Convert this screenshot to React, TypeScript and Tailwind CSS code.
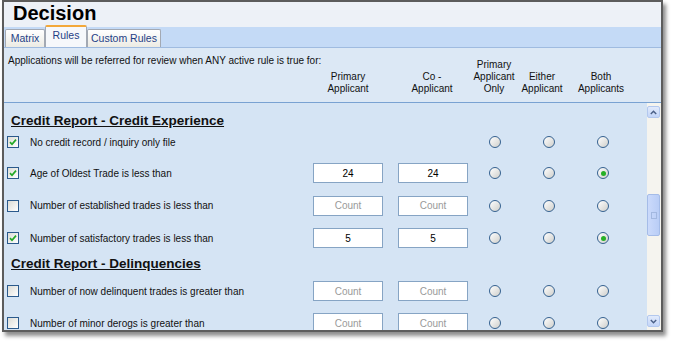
import React from 'react';

type Row = {
  label: string;
  checked: boolean;
  primary?: string;
  co?: string;
  both?: boolean;
  h: string;
};

const Checkbox = ({ checked }: { checked: boolean }) => (
  <span className="flex h-[12px] w-[12px] shrink-0 items-center justify-center border border-[#2b5a8c] bg-linear-to-br from-[#dcdcd6] to-white">
    {checked && (
      <svg width="8" height="8" viewBox="0 0 8 8">
        <path d="M1 4.2 L3 6.3 L7 1.6" fill="none" stroke="#22a826" strokeWidth="1.7" />
      </svg>
    )}
  </span>
);

const Radio = ({ checked }: { checked?: boolean }) => (
  <span className="flex h-[12px] w-[12px] items-center justify-center rounded-full border border-[#35618f] bg-linear-to-br from-white to-[#cfcfcb]">
    {checked && <span className="h-[5px] w-[5px] rounded-full bg-[#26b026]" />}
  </span>
);

const Field = ({ value }: { value?: string }) => (
  <div
    className={`flex h-[20px] w-[70px] items-center justify-center border border-[#86a4c4] bg-white text-[10px] ${
      value ? 'text-black' : 'text-[#9a9a9a]'
    }`}
  >
    {value ?? 'Count'}
  </div>
);

const RuleRow = ({ row }: { row: Row }) => (
  <div className={`flex items-center ${row.h}`}>
    <div className="flex w-[309px] items-center pl-[3px]">
      <Checkbox checked={row.checked} />
      <span className="ml-[11px] whitespace-nowrap text-[10px] text-[#111]">{row.label}</span>
    </div>
    {row.primary !== undefined ? (
      <>
        <Field value={row.primary || undefined} />
        <div className="ml-[15px]">
          <Field value={row.co || undefined} />
        </div>
      </>
    ) : (
      <div className="w-[155px]" />
    )}
    <div className="flex w-[54px] justify-center">
      <Radio />
    </div>
    <div className="flex w-[53px] justify-center">
      <Radio />
    </div>
    <div className="flex w-[56px] justify-center">
      <Radio checked={row.both} />
    </div>
  </div>
);

const Section = ({ title, className }: { title: string; className: string }) => (
  <div className={`pl-[7px] text-[13.5px] font-bold leading-[16px] text-[#111] ${className}`}>
    <span className="underline underline-offset-[1px]">{title}</span>
  </div>
);

const experience: Row[] = [
  { label: 'No credit record / inquiry only file', checked: true, h: 'h-[30px]' },
  { label: 'Age of Oldest Trade is less than', checked: true, primary: '24', co: '24', both: true, h: 'h-[32px]' },
  { label: 'Number of established trades is less than', checked: false, primary: '', co: '', h: 'h-[33px]' },
  { label: 'Number of satisfactory trades is less than', checked: true, primary: '5', co: '5', both: true, h: 'h-[32px]' },
];

const delinquencies: Row[] = [
  { label: 'Number of now delinquent trades is greater than', checked: false, primary: '', co: '', h: 'h-[32px]' },
  { label: 'Number of minor derogs is greater than', checked: false, primary: '', co: '', h: 'h-[32px]' },
];

const ScrollButton = ({ up }: { up?: boolean }) => (
  <div className="flex h-[12px] w-[13px] items-center justify-center rounded-[2px] border border-[#b3c8ee] bg-linear-to-b from-[#e2ebfc] to-[#c3d5f8]">
    <svg width="7" height="5" viewBox="0 0 7 5">
      <path d={up ? 'M0.8 4 L3.5 1.2 L6.2 4' : 'M0.8 1 L3.5 3.8 L6.2 1'} fill="none" stroke="#4a5f86" strokeWidth="1.4" />
    </svg>
  </div>
);

export default function App() {
  return (
    <div className="h-[347px] w-[677px] overflow-hidden bg-white font-['Liberation_Sans',Arial,sans-serif]">
      <div className="ml-[2px] flex h-[332px] w-[661px] flex-col border-2 border-[#5c5c5c] shadow-[3px_4px_4px_rgba(0,0,0,0.45)]">
        {/* title */}
        <div className="h-[25px] bg-[#edf1f7] pl-[9px] text-[20px] font-bold leading-[22px] text-black">Decision</div>

        {/* tabs */}
        <div className="flex h-[21px] items-end border-b border-[#9fbbe0] bg-[#c4daf6] pl-[1px] text-[10.5px]">
          <div className="flex h-[18px] w-[40px] items-center justify-center rounded-t-[2px] border border-b-0 border-[#a3a9b3] bg-linear-to-b from-white to-[#ecebe4] text-[#1f3f86]">
            Matrix
          </div>
          <div className="flex h-[22px] w-[42px] items-center justify-center rounded-t-[2px] border-x border-t-2 border-x-[#a3a9b3] border-t-[#f3a83a] bg-[#f6f8fb] pb-[3px] text-[#1f3f86]">
            Rules
          </div>
          <div className="flex h-[18px] w-[74px] items-center justify-center rounded-t-[2px] border border-b-0 border-[#a3a9b3] bg-linear-to-b from-white to-[#ecebe4] text-[#1f3f86]">
            Custom Rules
          </div>
        </div>

        {/* header */}
        <div className="flex h-[55px] border-b border-[#79a2d2] bg-[#dce8f5] text-[10px] leading-[12px] text-[#111]">
          <div className="w-[309px] pl-[4px] pt-[7px] whitespace-nowrap">
            Applications will be referred for review when ANY active rule is true for:
          </div>
          <div className="flex w-[70px] flex-col items-center justify-end pb-[7px] text-center">
            <span>Primary</span>
            <span>Applicant</span>
          </div>
          <div className="ml-[15px] flex w-[68px] flex-col items-center justify-end pb-[7px] text-center">
            <span>Co -</span>
            <span>Applicant</span>
          </div>
          <div className="ml-[4px] flex w-[48px] flex-col items-center justify-end pb-[7px] text-center">
            <span>Primary</span>
            <span>Applicant</span>
            <span>Only</span>
          </div>
          <div className="flex w-[48px] flex-col items-center justify-end pb-[7px] text-center">
            <span>Either</span>
            <span>Applicant</span>
          </div>
          <div className="ml-[8px] flex w-[54px] flex-col items-center justify-end pb-[7px] text-center">
            <span>Both</span>
            <span>Applicants</span>
          </div>
        </div>

        {/* rules */}
        <div className="flex min-h-0 flex-1 bg-[#d5e4f4]">
          <div className="min-w-0 flex-1 overflow-hidden">
            <Section title="Credit Report - Credit Experience" className="h-[24px] pt-[10px]" />
            {experience.map((r) => (
              <RuleRow key={r.label} row={r} />
            ))}
            <Section title="Credit Report - Delinquencies" className="h-[21px] pt-[2px]" />
            {delinquencies.map((r) => (
              <RuleRow key={r.label} row={r} />
            ))}
          </div>
          <div className="flex w-[14px] flex-col bg-[#f5f4ef] py-[3px]">
            <ScrollButton up />
            <div className="flex-1 pt-[76px]">
              <div className="flex h-[42px] w-[13px] items-center justify-center rounded-[2px] border border-[#a5bce8] bg-linear-to-r from-[#cbdafb] to-[#b9cdf6]">
                <div className="h-[7px] w-[6px] border border-[#a3b8e0]" />
              </div>
            </div>
            <ScrollButton />
          </div>
        </div>
      </div>
    </div>
  );
}
